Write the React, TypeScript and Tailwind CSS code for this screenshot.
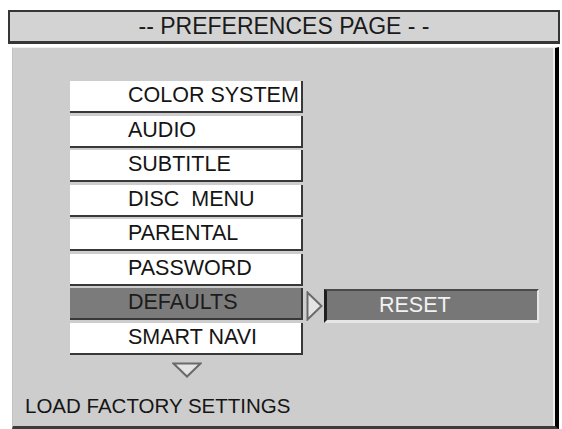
const items = [
  'COLOR SYSTEM',
  'AUDIO',
  'SUBTITLE',
  'DISC  MENU',
  'PARENTAL',
  'PASSWORD',
  'DEFAULTS',
  'SMART NAVI',
];

const selected = 'DEFAULTS';

function RightArrow() {
  return (
    <svg width="17" height="30" viewBox="0 0 17 30" className="ml-[3px] mt-[3px] shrink-0">
      <polygon points="1.5,1.5 15.5,15 1.5,28.5" fill="#e4e4e4" stroke="#6a6a6a" strokeWidth="2" />
    </svg>
  );
}

function DownArrow() {
  return (
    <svg width="30" height="16" viewBox="0 0 30 16">
      <polygon points="1.5,1.5 28.5,1.5 15,14.5" fill="#e4e4e4" stroke="#6a6a6a" strokeWidth="2" />
    </svg>
  );
}

function MenuItem({ label }: { label: string }) {
  const active = label === selected;
  return (
    <div className="flex h-[32px] items-start">
      <div
        className={`flex h-[32px] w-[233px] shrink-0 items-center border-b-2 border-r-2 border-[#383838] pl-[58px] leading-none whitespace-pre ${
          active ? 'bg-[#7b7b7b] text-[#1c1c1c]' : 'bg-white text-[#151515]'
        }`}
      >
        {label}
      </div>
      {active && (
        <>
          <RightArrow />
          <div className="ml-px mt-px flex h-[34px] w-[215px] shrink-0 items-center border-l-[3px] border-t-2 border-b-[3px] border-r-2 border-l-[#1e1e1e] border-t-[#4a4a4a] border-b-[#e6e6e6] border-r-[#e6e6e6] bg-[#777777] pl-[52px] leading-none text-[#f2f2f2]">
            RESET
          </div>
        </>
      )}
    </div>
  );
}

export default function App() {
  return (
    <div className="h-[429px] w-[562px] overflow-hidden bg-white pt-[10px] font-['Liberation_Sans',Arial,sans-serif]">
      <div className="ml-[8px] flex h-[34px] w-[552px] items-center justify-center border-2 border-b-[3px] border-[#363636] bg-[#d3d3d3] text-[23px] leading-none text-[#1a1a1a]">
        -- PREFERENCES PAGE - -
      </div>

      <div className="ml-[12px] mt-[3px] flex h-[382px] w-[547px] flex-col border-l border-t border-b-[3px] border-r-4 border-l-[#c2c2c2] border-t-[#efefef] border-b-[#3c3c3c] border-r-black bg-[#cdcdcd] pt-[33px] text-[21.5px] shadow-[inset_-2px_0_0_#ececec]">
        <div className="ml-[57px] flex flex-col gap-[2.5px]">
          {items.map((label) => (
            <MenuItem key={label} label={label} />
          ))}
        </div>
        <div className="ml-[57px] mt-[7px] flex w-[233px] justify-center">
          <DownArrow />
        </div>
        <div className="ml-[12px] mt-[18px] text-[20.5px] leading-none text-[#151515]">
          LOAD FACTORY SETTINGS
        </div>
      </div>
    </div>
  );
}
